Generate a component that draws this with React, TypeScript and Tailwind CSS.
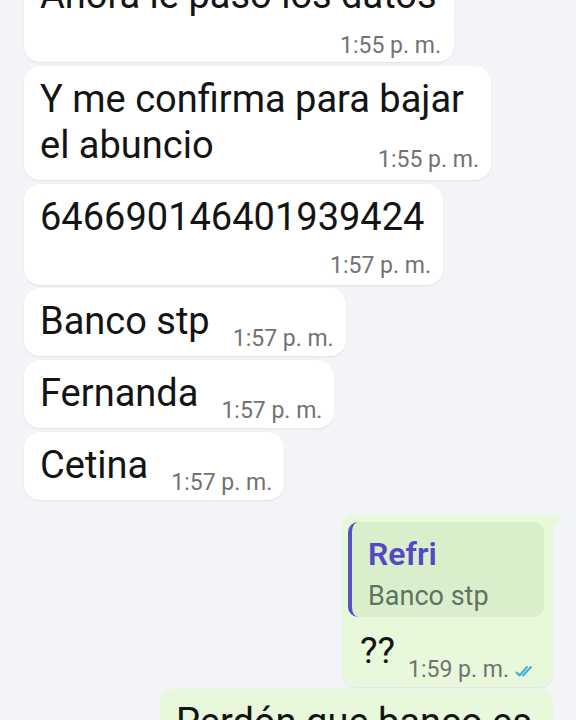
import React from "react";

const Ticks = () => (
  <svg width="18" height="12" viewBox="0 0 18 12" fill="none" stroke="#45aadd" strokeWidth="2" strokeLinecap="round" strokeLinejoin="round">
    <path d="M1.5 7.5 L4.5 10.5 L12 2" />
    <path d="M8 10.5 L16 2" />
  </svg>
);

const Time = ({ t, className = "" }: { t: string; className?: string }) => (
  <span className={"text-[23px] leading-[24px] text-[#727272] whitespace-nowrap " + className}>{t}</span>
);

const Short = ({ text, mt = "mt-[4px]" }: { text: string; mt?: string }) => (
  <div className={"self-start bg-white rounded-[16px] shadow-[0_1px_2px_rgba(0,0,0,0.08)] pl-[16px] pr-[12px] pt-[10px] pb-[12px] flex items-end " + mt}>
    <span className="text-[38px] leading-[46px] text-[#141414]">{text}</span>
    <Time t="1:57 p. m." className="ml-[23px] translate-y-[7px]" />
  </div>
);

export default function App() {
  return (
    <div className="h-[720px] w-[576px] overflow-hidden bg-[#f3f4f8] font-['Roboto',sans-serif]">
      <div className="flex flex-col pl-[24px] pr-[23px]">
        {/* clipped first bubble */}
        <div className="self-start mt-[-38px] w-[430px] bg-white rounded-[16px] shadow-[0_1px_2px_rgba(0,0,0,0.08)] pl-[16px] pr-[13px] pt-[10px] pb-[4px] flex flex-col">
          <span className="text-[38px] leading-[46px] text-[#141414]">Ahora le paso los datos</span>
          <Time t="1:55 p. m." className="self-end mt-[16px]" />
        </div>

        <div className="self-start mt-[4px] w-[467px] bg-white rounded-[16px] shadow-[0_1px_2px_rgba(0,0,0,0.08)] pl-[16px] pr-[12px] pt-[10px] pb-[12px]">
          <div className="text-[38px] leading-[46px] text-[#141414]">Y me confirma para bajar</div>
          <div className="flex items-end justify-between">
            <span className="text-[38px] leading-[46px] text-[#141414]">el abuncio</span>
            <Time t="1:55 p. m." className="translate-y-[4px]" />
          </div>
        </div>

        <div className="self-start mt-[4px] w-[419px] bg-white rounded-[16px] shadow-[0_1px_2px_rgba(0,0,0,0.08)] pl-[16px] pr-[12px] pt-[10px] pb-[7px] flex flex-col">
          <span className="text-[38px] leading-[46px] text-[#141414]">646690146401939424</span>
          <Time t="1:57 p. m." className="self-end mt-[14px]" />
        </div>

        <Short text="Banco stp" mt="mt-[3px]" />
        <Short text="Fernanda" />
        <Short text="Cetina" />

        {/* outgoing reply */}
        <div className="relative self-end mt-[15px] w-[211px] bg-[#e7f9da] rounded-[14px] rounded-tr-none shadow-[0_1px_2px_rgba(0,0,0,0.07)] pl-[6px] pr-[9px] pt-[7px] pb-[13px]">
          <svg className="absolute top-0 right-[-9px]" width="10" height="14" viewBox="0 0 10 14">
            <path d="M0 0 H8 Q10.5 0 9 2.2 L0 14 Z" fill="#e7f9da" />
          </svg>
          <div className="bg-[#d9efcb] rounded-[10px] border-l-[4px] border-[#5b4ec6] pl-[16px] pt-[14px] pb-[3px]">
            <div className="text-[32px] leading-[36px] font-semibold text-[#5449c4]">Refri</div>
            <div className="mt-[6px] text-[27px] leading-[36px] text-[#627162]">Banco stp</div>
          </div>
          <div className="mt-[11px] pl-[12px] flex items-end">
            <span className="text-[37px] leading-[46px] text-[#141414]">??</span>
            <Time t="1:59 p. m." className="ml-[13px] translate-y-[8px] text-[#6d786d]" />
            <span className="ml-[6px] translate-y-[3px]">
              <Ticks />
            </span>
          </div>
        </div>

        {/* bottom outgoing, clipped */}
        <div className="self-end mt-[2px] w-[393px] bg-[#e7f9da] rounded-[14px] pl-[16px] pt-[10px] pb-[10px]">
          <span className="text-[38px] leading-[46px] text-[#141414]">Perdón que banco es</span>
        </div>
      </div>
    </div>
  );
}
